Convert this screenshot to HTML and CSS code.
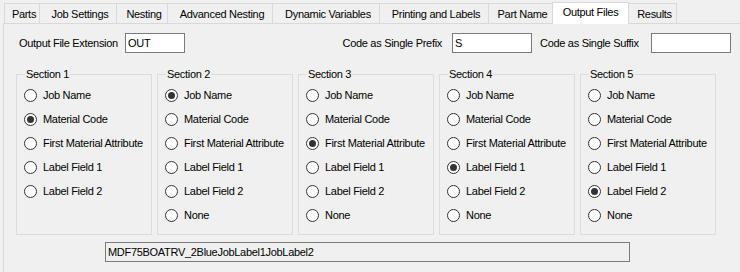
FILE: index.html
```html
<!DOCTYPE html>
<html>
<head>
<meta charset="utf-8">
<link rel="stylesheet" href="styles.css">
</head>
<body>
<div class="tabs">
  <div class="tab t-parts">Parts</div>
  <div class="tab t-job">Job Settings</div>
  <div class="tab t-nest">Nesting</div>
  <div class="tab t-adv">Advanced Nesting</div>
  <div class="tab t-dyn">Dynamic Variables</div>
  <div class="tab t-print">Printing and Labels</div>
  <div class="tab t-part">Part Name</div>
  <div class="tab t-out active">Output Files</div>
  <div class="tab t-res">Results</div>
</div>
<div class="panel">
  <div class="top-row">
    <span class="lbl lbl-ext">Output File Extension</span>
    <span class="input in-ext">OUT</span>
    <span class="lbl lbl-prefix">Code as Single Prefix</span>
    <span class="input in-prefix">S</span>
    <span class="lbl lbl-suffix">Code as Single Suffix</span>
    <span class="input in-suffix"></span>
  </div>
  <div class="groups">
    <fieldset class="group">
      <legend>Section 1</legend>
      <div class="opt"><span class="radio"></span>Job Name</div>
      <div class="opt"><span class="radio on"></span>Material Code</div>
      <div class="opt"><span class="radio"></span>First Material Attribute</div>
      <div class="opt"><span class="radio"></span>Label Field 1</div>
      <div class="opt"><span class="radio"></span>Label Field 2</div>
    </fieldset>
    <fieldset class="group">
      <legend>Section 2</legend>
      <div class="opt"><span class="radio on"></span>Job Name</div>
      <div class="opt"><span class="radio"></span>Material Code</div>
      <div class="opt"><span class="radio"></span>First Material Attribute</div>
      <div class="opt"><span class="radio"></span>Label Field 1</div>
      <div class="opt"><span class="radio"></span>Label Field 2</div>
      <div class="opt"><span class="radio"></span>None</div>
    </fieldset>
    <fieldset class="group">
      <legend>Section 3</legend>
      <div class="opt"><span class="radio"></span>Job Name</div>
      <div class="opt"><span class="radio"></span>Material Code</div>
      <div class="opt"><span class="radio on"></span>First Material Attribute</div>
      <div class="opt"><span class="radio"></span>Label Field 1</div>
      <div class="opt"><span class="radio"></span>Label Field 2</div>
      <div class="opt"><span class="radio"></span>None</div>
    </fieldset>
    <fieldset class="group">
      <legend>Section 4</legend>
      <div class="opt"><span class="radio"></span>Job Name</div>
      <div class="opt"><span class="radio"></span>Material Code</div>
      <div class="opt"><span class="radio"></span>First Material Attribute</div>
      <div class="opt"><span class="radio on"></span>Label Field 1</div>
      <div class="opt"><span class="radio"></span>Label Field 2</div>
      <div class="opt"><span class="radio"></span>None</div>
    </fieldset>
    <fieldset class="group">
      <legend>Section 5</legend>
      <div class="opt"><span class="radio"></span>Job Name</div>
      <div class="opt"><span class="radio"></span>Material Code</div>
      <div class="opt"><span class="radio"></span>First Material Attribute</div>
      <div class="opt"><span class="radio"></span>Label Field 1</div>
      <div class="opt"><span class="radio on"></span>Label Field 2</div>
      <div class="opt"><span class="radio"></span>None</div>
    </fieldset>
  </div>
  <div class="result">MDF75BOATRV_2BlueJobLabel1JobLabel2</div>
</div>
</body>
</html>
```
FILE: styles.css
```css
html, body {
  margin: 0;
  padding: 0;
  background: #f0f0f0;
  color: #000;
  font-family: "Liberation Sans", Arial, sans-serif;
  font-size: 11px;
  letter-spacing: -0.3px;
  overflow: hidden;
}
.tabs {
  display: flex;
  align-items: flex-end;
  height: 23px;
  padding-left: 4px;
}
.tab {
  box-sizing: border-box;
  height: 20px;
  line-height: 21px;
  padding-left: 4px;
  text-align: center;
  border: 1px solid #d9d9d9;
  border-bottom: none;
  border-left: none;
  background: #f0f0f0;
  white-space: nowrap;
}
.tab:first-child {
  border-left: 1px solid #d9d9d9;
}
.t-parts { width: 36px; }
.t-job { width: 77px; }
.t-nest { width: 51px; }
.t-adv { width: 105px; }
.t-dyn { width: 107px; }
.t-print { width: 109px; }
.t-part { width: 64px; }
.t-out { width: 77px; }
.t-res { width: 48px; }
.tab.active {
  height: 22px;
  line-height: 19px;
  padding-left: 0;
  background: #fff;
  border-left: 1px solid #d9d9d9;
  margin-left: -1px;
  position: relative;
  z-index: 1;
  margin-bottom: -1px;
}
.panel {
  margin-left: 3px;
  border-top: 1px solid #d9d9d9;
  border-left: 1px solid #d9d9d9;
  height: 260px;
}
.top-row {
  display: flex;
  align-items: center;
  padding-top: 9px;
  height: 20px;
}
.lbl {
  box-sizing: border-box;
  white-space: nowrap;
}
.lbl-ext {
  width: 121px;
  padding-left: 15px;
}
.lbl-prefix {
  width: 267px;
  text-align: right;
  padding-right: 10px;
}
.lbl-suffix {
  width: 119px;
  padding-left: 8px;
}
.input {
  box-sizing: border-box;
  height: 20px;
  border: 1px solid #7a7a7a;
  background: #fff;
  line-height: 18px;
  padding-left: 2px;
}
.in-ext { width: 60px; }
.in-prefix { width: 80px; }
.in-suffix { width: 80px; }
.groups {
  display: flex;
  gap: 5px;
  margin-top: 15px;
  padding-left: 12px;
  align-items: stretch;
}
.group {
  box-sizing: border-box;
  width: 136px;
  margin: 0;
  padding: 2px 0 7px 7px;
  border: 1px solid #dcdcdc;
  min-width: 0;
}
.group legend {
  padding: 0 1px;
  margin-left: 1px;
  line-height: 13px;
}
.opt {
  display: flex;
  align-items: center;
  height: 24px;
  white-space: nowrap;
}
.radio {
  box-sizing: border-box;
  width: 13px;
  height: 13px;
  border: 1px solid #333;
  border-radius: 50%;
  background: #fff;
  margin-right: 6px;
  display: flex;
  align-items: center;
  justify-content: center;
  flex: none;
}
.radio.on::after {
  content: "";
  width: 7px;
  height: 7px;
  border-radius: 50%;
  background: #333;
}
.result {
  box-sizing: border-box;
  margin-top: 7px;
  margin-left: 101px;
  width: 525px;
  height: 20px;
  border: 1px solid #7a7a7a;
  line-height: 18px;
  padding-left: 2px;
  background: #f0f0f0;
}
```
